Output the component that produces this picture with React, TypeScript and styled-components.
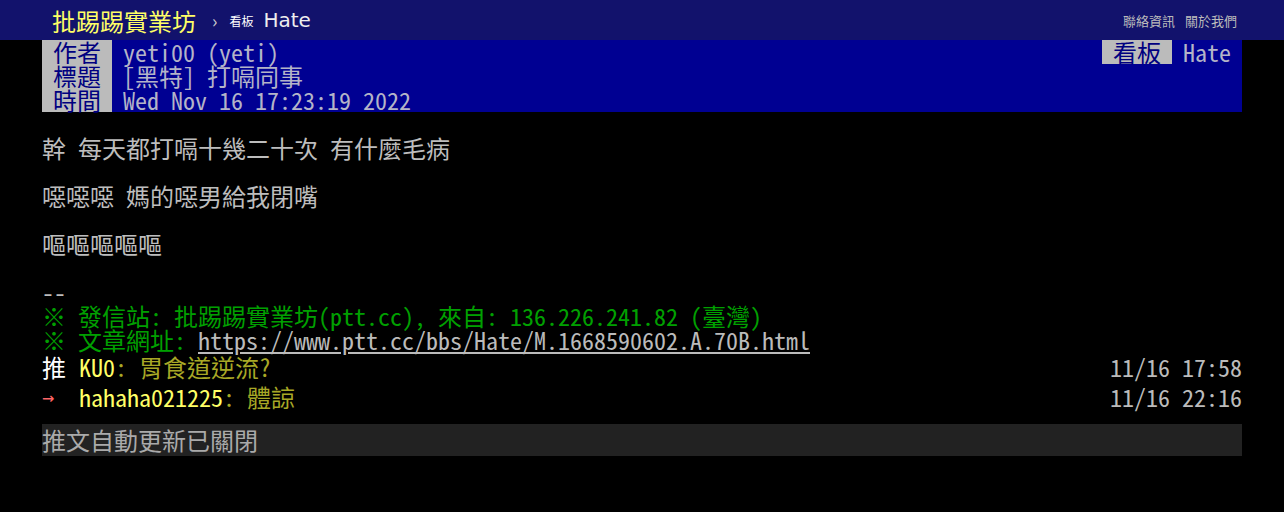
import styled, { createGlobalStyle } from "styled-components";

const MONO = `"Noto Sans Mono CJK TC", "Noto Sans CJK TC", "DejaVu Sans Mono", monospace`;
const SANS = `"Noto Sans CJK TC", "DejaVu Sans", sans-serif`;

const GlobalStyle = createGlobalStyle`
  html, body {
    margin: 0;
    background: #000;
  }
`;

const TopBar = styled.header`
  height: 40px;
  background: #12126c;
`;

const TopInner = styled.div`
  width: 1200px;
  height: 100%;
  margin: 0 auto;
  display: flex;
  align-items: center;
  justify-content: space-between;
  font-family: ${SANS};
`;

const Crumbs = styled.div`
  display: flex;
  align-items: center;
  padding-left: 10px;
`;

const Logo = styled.a`
  color: #ffff66;
  font-size: 24px;
  text-decoration: none;
`;

const Sep = styled.span`
  color: #ccc;
  font-size: 18px;
  margin: 0 12px 0 16px;
`;

const BoardLabel = styled.span`
  color: #fff;
  font-size: 12px;
  margin-right: 10px;
`;

const BoardName = styled.span`
  color: #eee;
  font-size: 20px;
  font-family: "DejaVu Sans", sans-serif;
`;

const Links = styled.nav`
  display: flex;
  gap: 10px;
  padding-right: 5px;
  font-size: 13px;
  color: #bbb;
`;

const Main = styled.main`
  width: 1200px;
  margin: 0 auto;
  font-family: ${MONO};
  font-size: 24px;
  line-height: 24px;
  color: #bdbdbd;
`;

const MetaLine = styled.div`
  display: flex;
  height: 24px;
  background: #000092;
`;

const MetaTag = styled.span`
  width: 70px;
  flex: none;
  text-align: center;
  background: #bbb;
  color: #000080;
  font-family: ${SANS};
`;

const MetaValue = styled.span<{ $grow?: boolean }>`
  flex: ${({ $grow }) => ($grow ? 1 : "none")};
  padding: 0 11px;
  color: #b4b4c8;
  white-space: pre;
`;

const Body = styled.div`
  white-space: pre-wrap;
`;

const Green = styled.span`
  color: #00a000;
`;

const Link = styled.a`
  color: #bbb;
  text-decoration: underline;
`;

const Push = styled.div`
  display: flex;
  height: 30px;
  line-height: 30px;
  white-space: pre;
`;

const PushTag = styled.span<{ $color: string; $arrow?: boolean }>`
  display: inline-block;
  width: 37px;
  color: ${({ $color }) => $color};
  font-family: ${({ $arrow }) => ($arrow ? `"DejaVu Sans Mono", monospace` : "inherit")};
  font-size: ${({ $arrow }) => ($arrow ? "20px" : "inherit")};
`;

const PushUser = styled.span`
  color: #ffff66;
`;

const PushContent = styled.span`
  color: #a8a826;
`;

const PushTime = styled.span`
  margin-left: auto;
  color: #bbb;
`;

const Polling = styled.div`
  margin-top: 12px;
  height: 32px;
  line-height: 32px;
  background: #222;
  color: #aaa;
`;

const pushes = [
  { tag: "推", color: "#fff", arrow: false, user: "KU0", content: ": 胃食道逆流?", time: "11/16 17:58" },
  { tag: "→", color: "#f66", arrow: true, user: "hahaha021225", content: ": 體諒", time: "11/16 22:16" },
];

export default function App() {
  return (
    <>
      <GlobalStyle />
      <TopBar>
        <TopInner>
          <Crumbs>
            <Logo>批踢踢實業坊</Logo>
            <Sep>›</Sep>
            <BoardLabel>看板</BoardLabel>
            <BoardName>Hate</BoardName>
          </Crumbs>
          <Links>
            <span>聯絡資訊</span>
            <span>關於我們</span>
          </Links>
        </TopInner>
      </TopBar>
      <Main>
        <MetaLine>
          <MetaTag>作者</MetaTag>
          <MetaValue $grow>yeti00 (yeti)</MetaValue>
          <MetaTag>看板</MetaTag>
          <MetaValue>Hate</MetaValue>
        </MetaLine>
        <MetaLine>
          <MetaTag>標題</MetaTag>
          <MetaValue $grow>[黑特] 打嗝同事</MetaValue>
        </MetaLine>
        <MetaLine>
          <MetaTag>時間</MetaTag>
          <MetaValue $grow>Wed Nov 16 17:23:19 2022</MetaValue>
        </MetaLine>
        <Body>
          {"\n幹 每天都打嗝十幾二十次 有什麼毛病\n\n噁噁噁 媽的噁男給我閉嘴\n\n嘔嘔嘔嘔嘔\n\n--\n"}
          <Green>※ 發信站: 批踢踢實業坊(ptt.cc), 來自: 136.226.241.82 (臺灣)</Green>
          {"\n"}
          <Green>※ 文章網址: </Green>
          <Link>https://www.ptt.cc/bbs/Hate/M.1668590602.A.70B.html</Link>
        </Body>
        {pushes.map((p) => (
          <Push key={p.user}>
            <PushTag $color={p.color} $arrow={p.arrow}>
              {p.tag}
            </PushTag>
            <PushUser>{p.user}</PushUser>
            <PushContent>{p.content}</PushContent>
            <PushTime>{p.time}</PushTime>
          </Push>
        ))}
        <Polling>推文自動更新已關閉</Polling>
      </Main>
    </>
  );
}
